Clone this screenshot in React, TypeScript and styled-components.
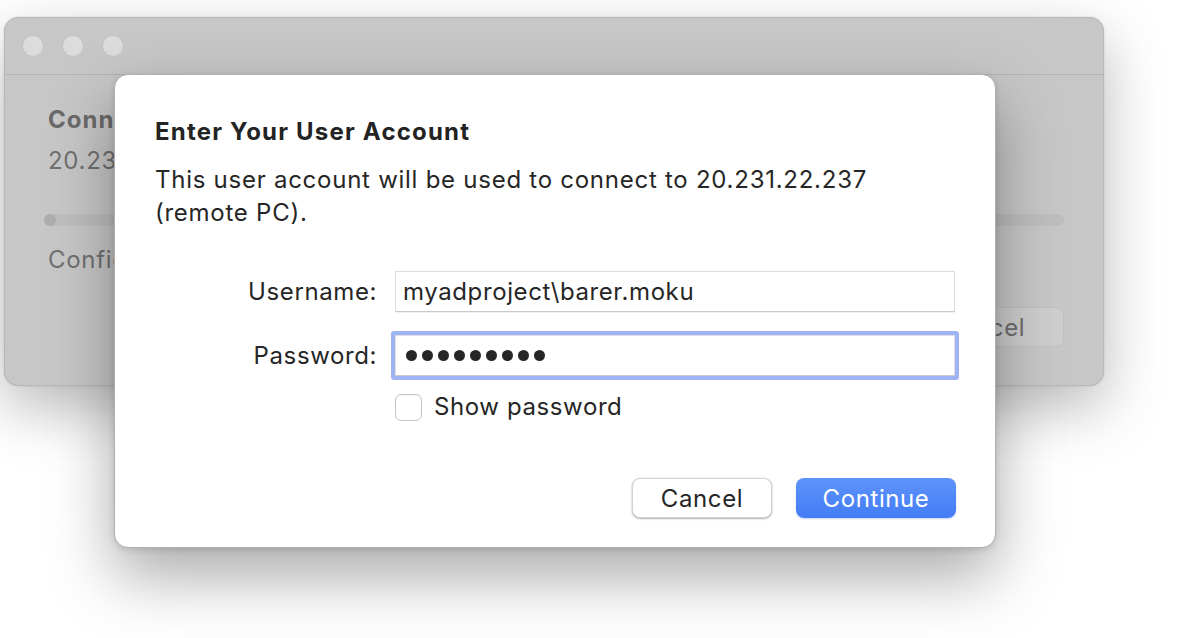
import React from "react";
import styled, { createGlobalStyle } from "styled-components";

const Global = createGlobalStyle`
  html, body { margin: 0; padding: 0; background: #ffffff; }
  body { font-family: Inter, "Open Sans", "Liberation Sans", sans-serif; -webkit-font-smoothing: antialiased; }
  * { box-sizing: border-box; }
`;

const Stage = styled.div`
  position: relative;
  width: 1184px;
  height: 638px;
  overflow: hidden;
  background: #ffffff;
`;

const BackWindow = styled.div`
  position: absolute;
  left: 4px;
  top: 17px;
  width: 1100px;
  height: 369px;
  border-radius: 14px;
  background: #c8c7c7;
  border: 1px solid #b9b8b8;
  box-shadow: 0 22px 60px rgba(0, 0, 0, 0.28), 0 0 2px rgba(0, 0, 0, 0.15);
  display: flex;
  flex-direction: column;
  overflow: hidden;
`;

const TitleBar = styled.div`
  height: 57px;
  flex: none;
  display: flex;
  align-items: center;
  gap: 18px;
  padding-left: 17px;
  border-bottom: 1px solid #b5b4b4;
`;

const Light = styled.span`
  width: 22px;
  height: 22px;
  border-radius: 50%;
  background: #dddcdc;
  border: 1px solid #c3c2c2;
`;

const BackBody = styled.div`
  flex: 1;
  display: flex;
  flex-direction: column;
  padding: 30px 39px 0 39px;
`;

const BackHeading = styled.div`
  font-size: 24px;
  line-height: 30px;
  font-weight: 700;
  letter-spacing: 1px;
  color: #6a6a6a;
  padding-left: 4px;
`;

const BackText = styled.div<{ $top: number }>`
  font-size: 24px;
  line-height: 30px;
  letter-spacing: 0.7px;
  color: #707070;
  padding-left: 4px;
  margin-top: ${(p) => p.$top}px;
`;

const Track = styled.div`
  margin-top: 38px;
  height: 12px;
  border-radius: 6px;
  background: #bfbebe;
  display: flex;
`;

const TrackFill = styled.div`
  width: 12px;
  height: 12px;
  border-radius: 6px;
  background: #afaeae;
`;

const BackActions = styled.div`
  margin-top: 32px;
  display: flex;
  justify-content: flex-end;
`;

const BackButton = styled.div`
  width: 160px;
  height: 40px;
  border-radius: 8px;
  background: #cfcece;
  border: 1px solid #c1c0c0;
  color: #6d6d6d;
  font-size: 24px;
  letter-spacing: 0.6px;
  display: flex;
  align-items: center;
  justify-content: center;
`;

const Modal = styled.div`
  position: absolute;
  left: 114px;
  top: 74px;
  width: 882px;
  height: 474px;
  border-radius: 14px;
  background: #ffffff;
  border: 1px solid #b0afaf;
  box-shadow: 0 28px 64px rgba(0, 0, 0, 0.34), 0 2px 6px rgba(0, 0, 0, 0.12);
  display: flex;
  flex-direction: column;
  padding: 42px 39px 29px 40px;
  color: #262626;
`;

const Title = styled.h1`
  margin: 0;
  font-size: 24px;
  line-height: 30px;
  font-weight: 700;
  letter-spacing: 1.2px;
  color: #232323;
`;

const Message = styled.p`
  margin: 16px 0 0 0;
  font-size: 24px;
  line-height: 33px;
  font-weight: 400;
  letter-spacing: 0.74px;
  color: #262626;
`;

const Form = styled.div`
  margin-top: 42px;
  display: grid;
  grid-template-columns: 222px 560px;
  column-gap: 18px;
  row-gap: 23px;
  align-items: center;
  font-size: 24px;
  letter-spacing: 0.6px;
`;

const Label = styled.label`
  text-align: right;
  line-height: 30px;
  color: #262626;
`;

const Field = styled.div<{ $focused?: boolean }>`
  height: 41px;
  display: flex;
  align-items: center;
  padding-left: 7px;
  background: #ffffff;
  border: 1px solid #dedede;
  border-bottom-color: #c9c9c9;
  color: #262626;
  box-shadow: ${(p) =>
    p.$focused ? "0 0 0 4px #9fb4f5" : "0 0.5px 1px rgba(0, 0, 0, 0.06)"};
  border-radius: ${(p) => (p.$focused ? "1px" : "0")};
`;

const Dots = styled.div`
  display: flex;
  gap: 5px;
  padding-left: 3px;
`;

const Dot = styled.span`
  width: 11px;
  height: 11px;
  border-radius: 50%;
  background: #262626;
`;

const CheckRow = styled.div`
  grid-column: 2;
  margin-top: -7px;
  display: flex;
  align-items: center;
  gap: 12px;
  line-height: 30px;
  color: #262626;
`;

const CheckBox = styled.span`
  width: 27px;
  height: 27px;
  border-radius: 6px;
  border: 1px solid #c6c6c6;
  background: #ffffff;
  box-shadow: inset 0 1px 1px rgba(0, 0, 0, 0.04);
`;

const Actions = styled.div`
  margin-top: auto;
  display: flex;
  justify-content: flex-end;
  gap: 24px;
`;

const Button = styled.button<{ $primary?: boolean }>`
  height: 40px;
  width: ${(p) => (p.$primary ? 160 : 140)}px;
  border-radius: 8px;
  font-family: inherit;
  font-size: 24px;
  letter-spacing: 0.6px;
  display: flex;
  align-items: center;
  justify-content: center;
  padding: 0;
  cursor: default;
  border: ${(p) => (p.$primary ? "none" : "0.5px solid #d4d4d4")};
  color: ${(p) => (p.$primary ? "#ffffff" : "#262626")};
  background: ${(p) =>
    p.$primary ? "linear-gradient(#5e93fa, #437df7)" : "#ffffff"};
  box-shadow: ${(p) =>
    p.$primary
      ? "0 1px 2px rgba(40, 90, 220, 0.25)"
      : "0 1px 2px rgba(0, 0, 0, 0.28), 0 0 0 0.5px rgba(0,0,0,0.06)"};
`;

export default function App() {
  return (
    <>
      <Global />
      <Stage>
        <BackWindow>
          <TitleBar>
            <Light />
            <Light />
            <Light />
          </TitleBar>
          <BackBody>
            <BackHeading>Connecting to 20.231.22.237</BackHeading>
            <BackText $top={11}>20.231.22.237</BackText>
            <Track>
              <TrackFill />
            </Track>
            <BackText $top={19}>Configuring remote PC...</BackText>
            <BackActions>
              <BackButton>Cancel</BackButton>
            </BackActions>
          </BackBody>
        </BackWindow>
        <Modal>
          <Title>Enter Your User Account</Title>
          <Message>
            This user account will be used to connect to 20.231.22.237
            <br />
            (remote PC).
          </Message>
          <Form>
            <Label>Username:</Label>
            <Field>myadproject\barer.moku</Field>
            <Label>Password:</Label>
            <Field $focused>
              <Dots aria-label="password">
                {Array.from({ length: 9 }).map((_, i) => (
                  <Dot key={i} />
                ))}
              </Dots>
            </Field>
            <CheckRow>
              <CheckBox />
              Show password
            </CheckRow>
          </Form>
          <Actions>
            <Button>Cancel</Button>
            <Button $primary>Continue</Button>
          </Actions>
        </Modal>
      </Stage>
    </>
  );
}
